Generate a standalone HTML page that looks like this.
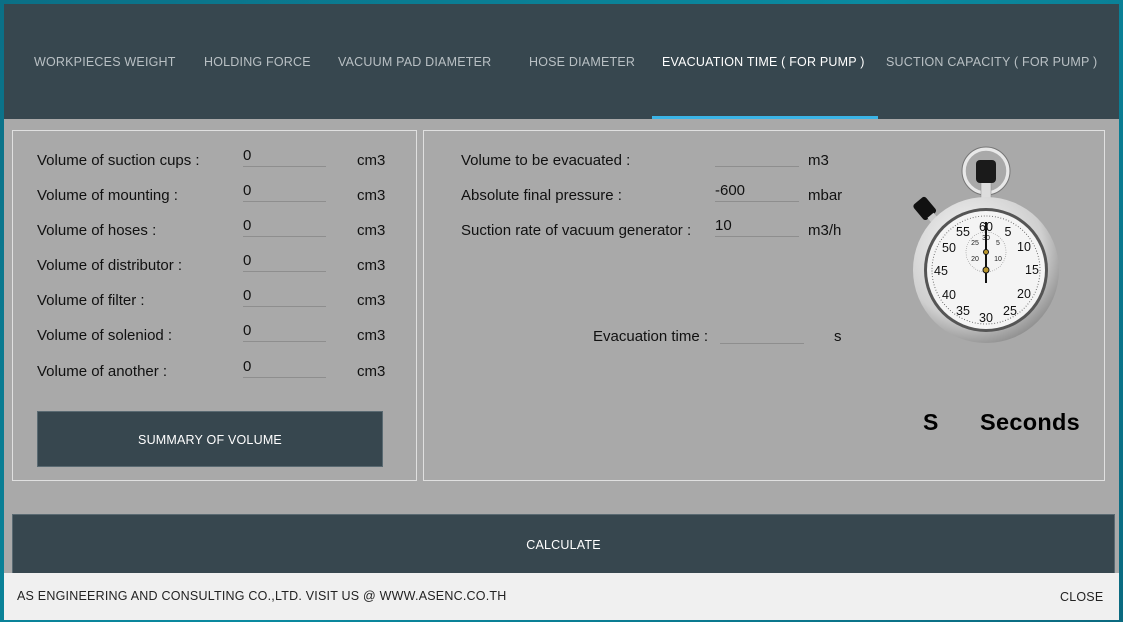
<!DOCTYPE html>
<html><head><meta charset="utf-8"><style>
*{margin:0;padding:0;box-sizing:border-box}
body{width:1123px;height:622px;overflow:hidden;background:linear-gradient(135deg,#0b6f86,#0a8aa0 50%,#0b6a80);font-family:"Liberation Sans",sans-serif;position:relative}
.a{position:absolute}
#hdr{left:4px;top:4px;width:1115px;height:115px;background:#37474f}
.tab{top:55px;font-size:12.5px;letter-spacing:0.2px;color:#b9c0c4;white-space:nowrap}
#body{left:4px;top:119px;width:1115px;height:455px;background:#a9a9a9}
.box{border:1px solid #e0e0e0}
.l{font-size:15px;color:#111;white-space:nowrap}
.v{font-size:15px;color:#111}
.ln{height:1px;background:#8e8e8e}
.btn{background:#37474f;color:#fff;font-size:12.5px;letter-spacing:0.2px;text-align:center}
</style></head><body>
<div id="hdr" class="a"></div>
<div class="a tab" style="left:34px">WORKPIECES WEIGHT</div>
<div class="a tab" style="left:204px">HOLDING FORCE</div>
<div class="a tab" style="left:338px">VACUUM PAD DIAMETER</div>
<div class="a tab" style="left:529px">HOSE DIAMETER</div>
<div class="a tab" style="left:662px;color:#fff">EVACUATION TIME ( FOR PUMP )</div>
<div class="a tab" style="left:886px">SUCTION CAPACITY ( FOR PUMP )</div>
<div class="a" style="left:652px;top:116px;width:226px;height:3px;background:#3bb4e6"></div>
<div id="body" class="a"></div>
<div class="a box" style="left:12px;top:130px;width:405px;height:351px"></div>
<div class="a box" style="left:423px;top:130px;width:682px;height:351px"></div>

<div class="a l" style="left:37px;top:152px">Volume of suction cups :</div>
<div class="a l" style="left:37px;top:187px">Volume of mounting :</div>
<div class="a l" style="left:37px;top:222px">Volume of hoses :</div>
<div class="a l" style="left:37px;top:257px">Volume of distributor :</div>
<div class="a l" style="left:37px;top:292px">Volume of filter :</div>
<div class="a l" style="left:37px;top:327px">Volume of soleniod :</div>
<div class="a l" style="left:37px;top:363px">Volume of another :</div>

<div class="a v" style="left:243px;top:147px">0</div><div class="a ln" style="left:243px;top:166px;width:83px"></div>
<div class="a v" style="left:243px;top:182px">0</div><div class="a ln" style="left:243px;top:201px;width:83px"></div>
<div class="a v" style="left:243px;top:217px">0</div><div class="a ln" style="left:243px;top:236px;width:83px"></div>
<div class="a v" style="left:243px;top:252px">0</div><div class="a ln" style="left:243px;top:271px;width:83px"></div>
<div class="a v" style="left:243px;top:287px">0</div><div class="a ln" style="left:243px;top:306px;width:83px"></div>
<div class="a v" style="left:243px;top:322px">0</div><div class="a ln" style="left:243px;top:341px;width:83px"></div>
<div class="a v" style="left:243px;top:358px">0</div><div class="a ln" style="left:243px;top:377px;width:83px"></div>

<div class="a l" style="left:357px;top:152px">cm3</div>
<div class="a l" style="left:357px;top:187px">cm3</div>
<div class="a l" style="left:357px;top:222px">cm3</div>
<div class="a l" style="left:357px;top:257px">cm3</div>
<div class="a l" style="left:357px;top:292px">cm3</div>
<div class="a l" style="left:357px;top:327px">cm3</div>
<div class="a l" style="left:357px;top:363px">cm3</div>

<div class="a btn" style="left:37px;top:411px;width:346px;height:56px;line-height:56px;border:1px solid #5a6a72">SUMMARY OF VOLUME</div>

<div class="a l" style="left:461px;top:152px">Volume to be evacuated :</div>
<div class="a l" style="left:461px;top:187px">Absolute final pressure :</div>
<div class="a l" style="left:461px;top:222px">Suction rate of vacuum generator :</div>
<div class="a ln" style="left:715px;top:166px;width:84px"></div>
<div class="a v" style="left:715px;top:182px">-600</div><div class="a ln" style="left:715px;top:201px;width:84px"></div>
<div class="a v" style="left:715px;top:217px">10</div><div class="a ln" style="left:715px;top:236px;width:84px"></div>
<div class="a l" style="left:808px;top:152px">m3</div>
<div class="a l" style="left:808px;top:187px">mbar</div>
<div class="a l" style="left:808px;top:222px">m3/h</div>
<div class="a l" style="left:593px;top:328px">Evacuation time :</div>
<div class="a ln" style="left:720px;top:343px;width:84px"></div>
<div class="a l" style="left:834px;top:328px">s</div>

<div class="a" style="left:923px;top:409px;font-size:23px;font-weight:bold;color:#000">S</div>
<div class="a" style="left:980px;top:409px;font-size:23.5px;font-weight:bold;color:#000;letter-spacing:0.3px">Seconds</div>

<svg class="a" style="left:900px;top:140px" width="180" height="210" viewBox="900 140 180 210">
<defs><radialGradient id="g" cx="0.4" cy="0.35" r="0.7"><stop offset="0" stop-color="#fafafa"/><stop offset="0.7" stop-color="#cfcfcf"/><stop offset="1" stop-color="#8a8a8a"/></radialGradient></defs>
<circle cx="986" cy="171" r="22" fill="none" stroke="#e8e8e8" stroke-width="3.5"/>
<circle cx="986" cy="171" r="24" fill="none" stroke="#777" stroke-width="1"/>
<rect x="981" y="182" width="10" height="18" fill="#ddd" stroke="#888" stroke-width="0.5"/>
<rect x="976" y="160" width="20" height="23" rx="4" fill="#1a1a1a"/>
<g transform="rotate(-40 926 210)"><rect x="918" y="198" width="16" height="20" rx="3" fill="#111"/><rect x="922" y="217" width="8" height="8" fill="#ccc"/></g>
<circle cx="986" cy="270" r="73" fill="url(#g)"/>
<circle cx="986" cy="270" r="62" fill="#555"/>
<circle cx="986" cy="270" r="59" fill="#f4f4f4"/>
<circle cx="986" cy="270" r="54" fill="none" stroke="#555" stroke-width="1" stroke-dasharray="0.8 2"/>
<circle cx="986" cy="252" r="20" fill="none" stroke="#555" stroke-width="0.6" stroke-dasharray="0.6 1.6"/>
<g font-family="Liberation Sans" font-size="12.5" fill="#111" text-anchor="middle">
<text x="986" y="231">60</text><text x="1008" y="236">5</text><text x="1024" y="251">10</text><text x="1032" y="274">15</text><text x="1024" y="298">20</text><text x="1010" y="315">25</text><text x="986" y="322">30</text><text x="963" y="315">35</text><text x="949" y="299">40</text><text x="941" y="275">45</text><text x="949" y="252">50</text><text x="963" y="236">55</text>
</g>
<g font-family="Liberation Sans" font-size="7" fill="#222" text-anchor="middle"><text x="986" y="240">30</text><text x="975" y="245">25</text><text x="998" y="245">5</text><text x="975" y="261">20</text><text x="998" y="261">10</text></g>
<line x1="986" y1="222" x2="986" y2="283" stroke="#111" stroke-width="2"/>
<circle cx="986" cy="270" r="3" fill="#b8962e" stroke="#111"/>
<circle cx="986" cy="252" r="2.5" fill="#b8962e" stroke="#111"/>
</svg>

<div class="a btn" style="left:12px;top:514px;width:1103px;height:60px;line-height:60px;border:1px solid #5a6a72;border-bottom:none">CALCULATE</div>
<div class="a" style="left:4px;top:573px;width:1115px;height:47px;background:#f0f0f0"></div>
<div class="a" style="left:17px;top:589px;font-size:12.5px;letter-spacing:0.22px;color:#222">AS ENGINEERING AND CONSULTING CO.,LTD. VISIT US @ WWW.ASENC.CO.TH</div>
<div class="a" style="left:1060px;top:590px;font-size:12.5px;letter-spacing:0.2px;color:#222">CLOSE</div>
</body></html>
